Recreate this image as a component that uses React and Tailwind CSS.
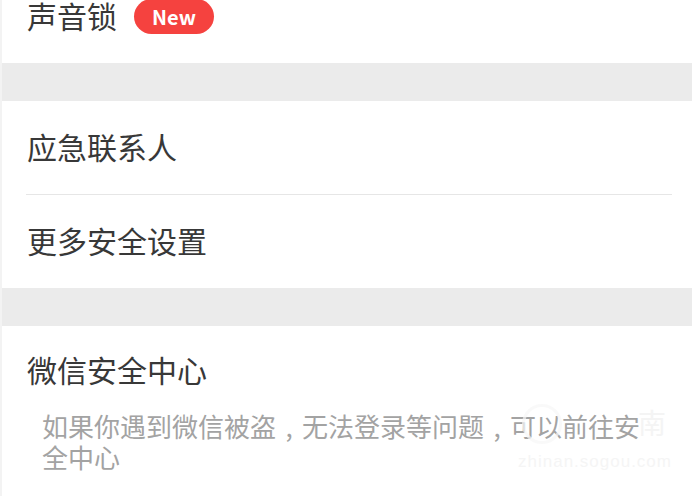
import React from 'react';

const Row = ({ children }) => (
  <div className="h-[93px] flex items-center pl-[27px] pb-[4px]">
    <span className="text-[30px] leading-[40px] text-[#383838]">{children}</span>
  </div>
);

const Gap = () => <div className="h-[38px] bg-[#ebebeb]" />;

// comma sits in the middle of its cell in the screenshot
const Comma = () => <span className="inline-block w-[26px] text-center">,</span>;

export default function App() {
  return (
    <div
      className="relative w-[692px] h-[496px] overflow-hidden bg-white border-l-2 border-[#f3f3f3]"
      style={{ fontFamily: '"Noto Sans CJK SC", "Noto Sans", sans-serif' }}
    >
      {/* 声音锁 row, cut off at the top */}
      <div className="h-[63px] flex items-start pl-[25px] gap-[17px]">
        <span className="text-[30px] leading-[35px] -mt-[2px] text-[#383838]">声音锁</span>
        <span className="h-[35px] w-[80px] -mt-[1px] rounded-full bg-[#f5423f] text-white font-bold text-[20px] leading-[35px] text-center">
          New
        </span>
      </div>

      <Gap />

      <div className="-ml-[2px]">
        <Row>应急联系人</Row>
      </div>
      <div className="h-px bg-[#e6e6e6] ml-[24px] mr-[20px]" />
      <div className="-ml-[2px]">
        <Row>更多安全设置</Row>
      </div>

      <Gap />

      {/* 微信安全中心 */}
      <div className="pt-[23px] pl-[25px]">
        <div className="text-[30px] leading-[40px] text-[#383838]">微信安全中心</div>
        <p className="mt-[21px] pl-[15px] pr-[36px] text-[26px] leading-[31px] text-[#a3a3a3]">
          如果你遇到微信被盗<Comma />无法登录等问题<Comma />可以前往安全中心
        </p>
      </div>

      {/* sogou watermark */}
      <div className="absolute left-[520px] top-[404px] w-[40px] h-[40px] rounded-full border-[3px] border-[#f6f6f6] opacity-70" />
      <div className="absolute left-[636px] top-[406px] text-[28px] leading-[32px] text-[#f4f4f4]">南</div>
      <div
        className="absolute left-[516px] top-[452px] text-[17px] leading-[20px] text-[#f5f5f5] tracking-[1px]"
        style={{ fontFamily: '"Liberation Sans", sans-serif' }}
      >
        zhinan.sogou.com
      </div>
    </div>
  );
}
